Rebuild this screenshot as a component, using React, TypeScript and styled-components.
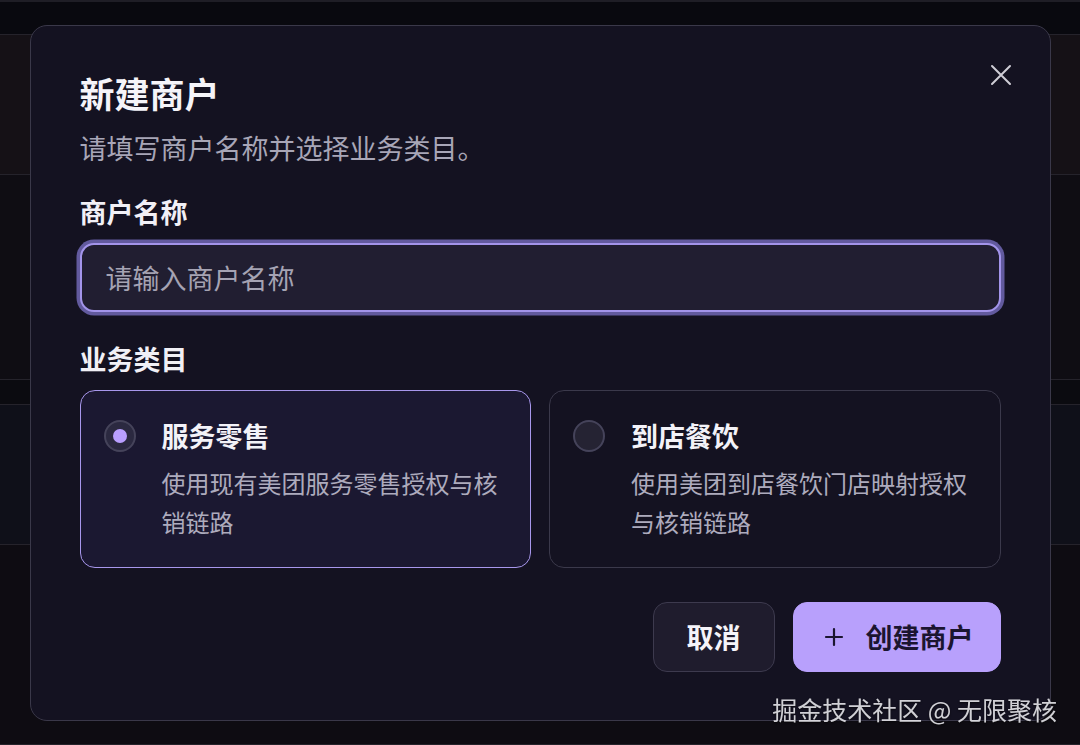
import React, {useState} from 'react';
import styled, {createGlobalStyle} from 'styled-components';

const GlobalStyle = createGlobalStyle`
	html, body {
		margin: 0;
		padding: 0;
		background: #0a0a11;
	}

	body {
		font-family: "Inter", "Noto Sans CJK SC", sans-serif;
		-webkit-font-smoothing: antialiased;
	}

	* {
		box-sizing: border-box;
	}
`;

const cjk = `"Noto Sans CJK SC", "Noto Sans", sans-serif`;

// page behind the dialog, already dimmed by the overlay
const Page = styled.div`
	display: flex;
	flex-direction: column;
	height: 745px;
	overflow: hidden;
	border-top: 2px solid #1f1e26;
`;

const PageRow = styled.div<{$h: number; $bg: string}>`
	height: ${p => p.$h}px;
	background: ${p => p.$bg};
	border-bottom: 1px solid #25232b;
	flex-shrink: 0;
`;

const Overlay = styled.div`
	position: fixed;
	inset: 0;
	display: flex;
	align-items: center;
	justify-content: center;
`;

const Dialog = styled.div`
	position: relative;
	width: 1021px;
	padding: 44px 49px 48px;
	background: #141221;
	border: 1px solid #3a3849;
	border-radius: 17px;
	font-family: ${cjk};
`;

const CloseButton = styled.button`
	position: absolute;
	top: 29px;
	right: 29px;
	width: 40px;
	height: 40px;
	display: flex;
	align-items: center;
	justify-content: center;
	padding: 0;
	border: none;
	border-radius: 8px;
	background: transparent;
	color: #cfcdd6;
	cursor: pointer;
`;

const Title = styled.h2`
	margin: 0;
	font-size: 35px;
	line-height: 46px;
	font-weight: 700;
	color: #f5f4f9;
`;

const Subtitle = styled.p`
	margin: 13px 0 0;
	font-size: 27px;
	line-height: 38px;
	color: #a8a6b7;
`;

const Label = styled.div<{$top: number}>`
	margin-top: ${p => p.$top}px;
	font-size: 27px;
	line-height: 38px;
	font-weight: 700;
	color: #f1f0f6;
`;

const Input = styled.input`
	display: block;
	width: 100%;
	height: 69px;
	margin-top: 12px;
	padding: 0 24px;
	background: #211e31;
	border: 2px solid #a394ea;
	border-radius: 14px;
	box-shadow: 0 0 0 3.5px #625a9e;
	outline: none;
	font-family: ${cjk};
	font-size: 27px;
	color: #f1f0f6;
	caret-color: #e8e6f0;

	&::placeholder {
		color: #a5a3b3;
	}
`;

const Options = styled.div`
	display: grid;
	grid-template-columns: 1fr 1fr;
	gap: 18px;
	margin-top: 12px;
`;

const Option = styled.label<{$selected: boolean}>`
	display: flex;
	gap: 26px;
	padding: 26px 23px 26px;
	border-radius: 15px;
	border: 1.5px solid ${p => (p.$selected ? '#a897ec' : '#3b394b')};
	background: ${p => (p.$selected ? '#1b1831' : '#141221')};
	cursor: pointer;
`;

const Radio = styled.span<{$selected: boolean}>`
	flex-shrink: 0;
	width: 32px;
	height: 32px;
	margin-top: 3px;
	display: flex;
	align-items: center;
	justify-content: center;
	border-radius: 50%;
	border: 2px solid #45435a;
	background: ${p => (p.$selected ? '#2b2940' : '#252333')};

	&::after {
		content: "";
		display: ${p => (p.$selected ? 'block' : 'none')};
		width: 14px;
		height: 14px;
		border-radius: 50%;
		background: #b99fff;
	}
`;

const OptionBody = styled.div`
	display: flex;
	flex-direction: column;
	gap: 8px;
	min-width: 0;
`;

const OptionTitle = styled.div`
	font-size: 27px;
	line-height: 38px;
	font-weight: 700;
	color: #f3f2f8;
`;

const OptionDesc = styled.div`
	font-size: 24px;
	line-height: 39px;
	color: #adabbd;
`;

const Footer = styled.div`
	display: flex;
	justify-content: flex-end;
	gap: 18px;
	margin-top: 34px;
`;

const Button = styled.button<{$primary?: boolean}>`
	height: 70px;
	display: flex;
	align-items: center;
	gap: 22px;
	padding: ${p => (p.$primary ? '0 26px 0 30px' : '0 33px')};
	border-radius: 14px;
	border: 1.5px solid ${p => (p.$primary ? '#b8a0fc' : '#3d3a4e')};
	background: ${p => (p.$primary ? '#b8a0fc' : '#1f1c2d')};
	color: ${p => (p.$primary ? '#1b1530' : '#f5f4f9')};
	font-family: ${cjk};
	font-size: 27px;
	font-weight: 700;
	cursor: pointer;
`;

const Watermark = styled.div`
	position: fixed;
	right: 23px;
	bottom: 18px;
	font-family: ${cjk};
	font-size: 25px;
	line-height: 36px;
	color: rgba(236, 236, 240, 0.88);
	text-shadow: 0 1px 2px rgba(0, 0, 0, 0.6);
	pointer-events: none;
`;

const categories = [
	{id: 'retail', title: '服务零售', desc: '使用现有美团服务零售授权与核销链路'},
	{id: 'dining', title: '到店餐饮', desc: '使用美团到店餐饮门店映射授权与核销链路'}
];

const App = (): JSX.Element => {
	const [category, setCategory] = useState('retail');

	return (
		<>
			<GlobalStyle/>
			<Page>
				<PageRow $h={33} $bg="#09090f"/>
				<PageRow $h={140} $bg="#151116"/>
				<PageRow $h={205} $bg="#0f0d13"/>
				<PageRow $h={25} $bg="#0b0b10"/>
				<PageRow $h={140} $bg="#0f1019"/>
				<PageRow $h={200} $bg="#0e0c12"/>
			</Page>
			<Overlay>
				<Dialog role="dialog">
					<CloseButton aria-label="关闭">
						<svg width="24" height="24" viewBox="0 0 24 24" fill="none" stroke="currentColor" strokeWidth="2" strokeLinecap="round">
							<path d="M21 3 3 21M3 3l18 18"/>
						</svg>
					</CloseButton>
					<Title>新建商户</Title>
					<Subtitle>请填写商户名称并选择业务类目。</Subtitle>
					<Label $top={26}>商户名称</Label>
					<Input placeholder="请输入商户名称" autoFocus/>
					<Label $top={28}>业务类目</Label>
					<Options>
						{categories.map(c => (
							<Option key={c.id} $selected={category === c.id} onClick={() => setCategory(c.id)}>
								<Radio $selected={category === c.id}/>
								<OptionBody>
									<OptionTitle>{c.title}</OptionTitle>
									<OptionDesc>{c.desc}</OptionDesc>
								</OptionBody>
							</Option>
						))}
					</Options>
					<Footer>
						<Button>取消</Button>
						<Button $primary>
							<svg width="20" height="20" viewBox="0 0 20 20" fill="none" stroke="currentColor" strokeWidth="2.2" strokeLinecap="round">
								<path d="M10 2v16M2 10h16"/>
							</svg>
							创建商户
						</Button>
					</Footer>
				</Dialog>
			</Overlay>
			<Watermark>掘金技术社区 @ 无限聚核</Watermark>
		</>
	);
};

export default App;
